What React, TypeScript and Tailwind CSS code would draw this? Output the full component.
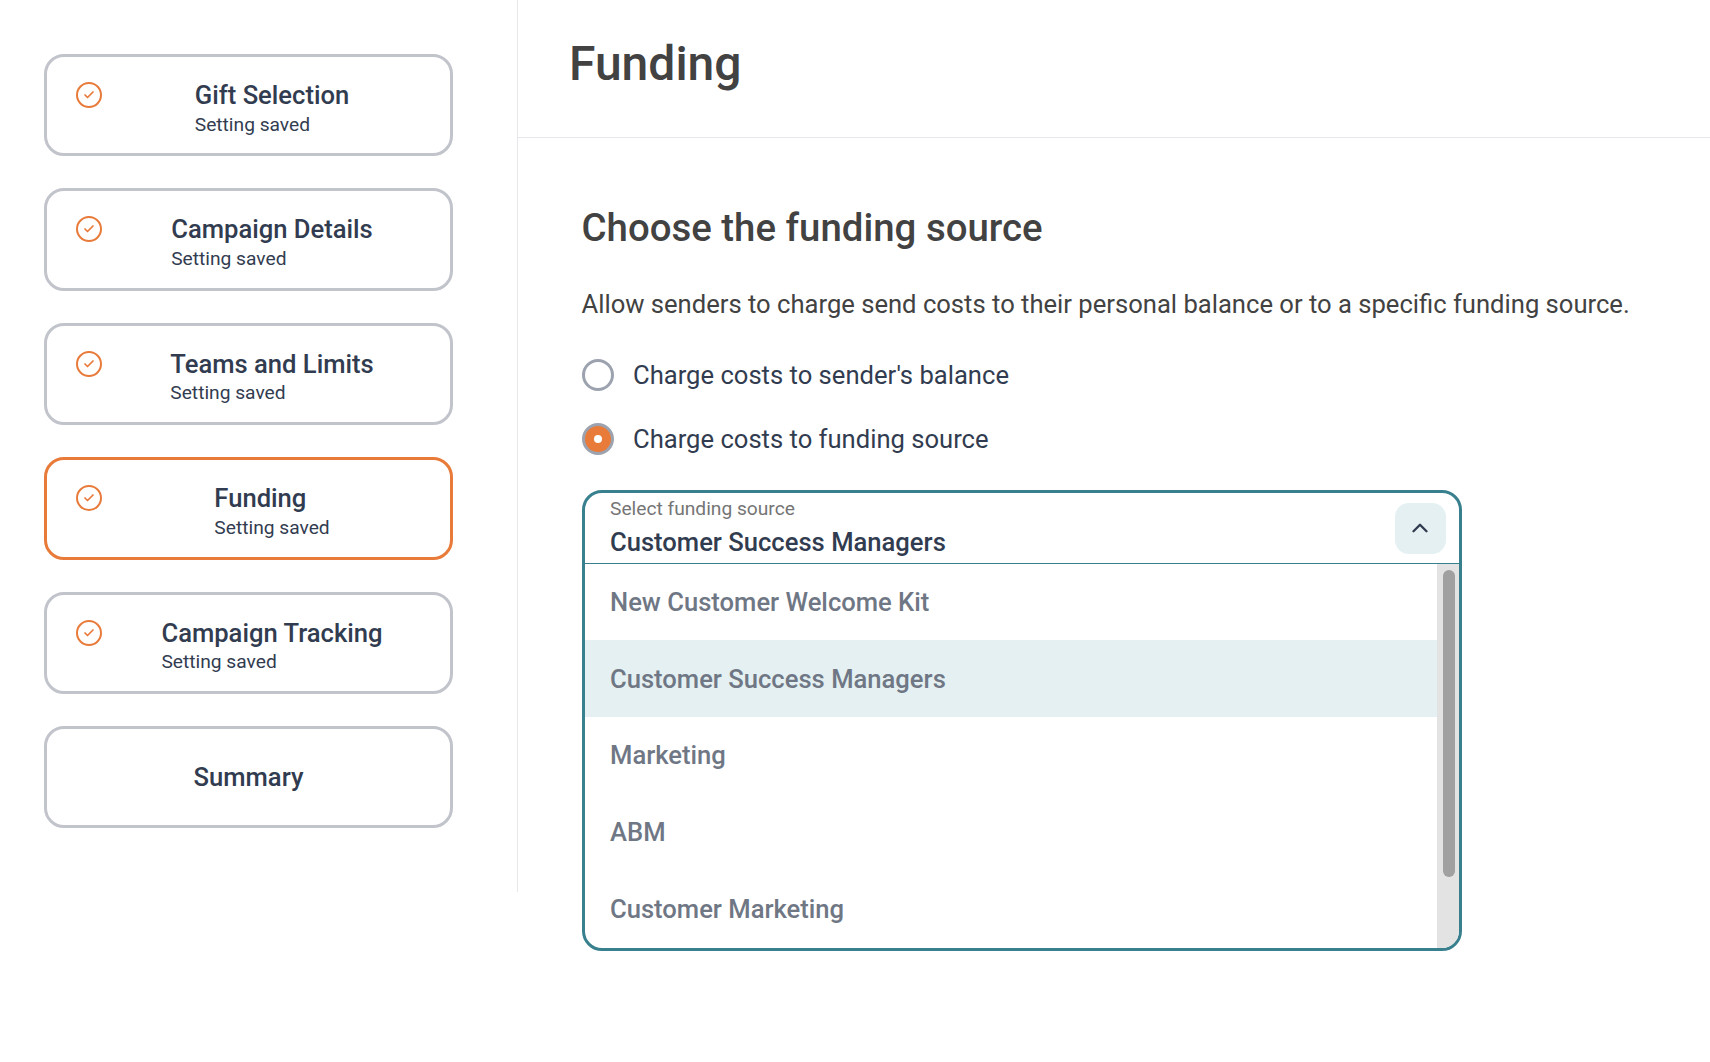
import { Check, ChevronUp } from "lucide-react";

const steps = [
  { title: "Gift Selection", saved: true },
  { title: "Campaign Details", saved: true },
  { title: "Teams and Limits", saved: true },
  { title: "Funding", saved: true, active: true },
  { title: "Campaign Tracking", saved: true },
  { title: "Summary", saved: false },
];

const sources = ["New Customer Welcome Kit", "Customer Success Managers", "Marketing", "ABM", "Customer Marketing"];

function StepCard({ title, saved, active }: { title: string; saved: boolean; active?: boolean }) {
  return (
    <div
      className={`flex h-[102.4px] w-[409px] rounded-[20px] border-[3px] bg-white ${
        active ? "border-[#e87a3a]" : "border-[#c2c4cc]"
      } ${saved ? "pl-[29px] pr-[8px]" : "items-center justify-center"}`}
    >
      {saved && (
        <div className="mt-[25px] flex h-[26px] w-[26px] shrink-0 items-center justify-center rounded-full border-2 border-[#e87a3a]">
          <Check size={12} strokeWidth={3.5} className="text-[#e87a3a]" />
        </div>
      )}
      <div className={saved ? "flex flex-1 justify-center pt-[21px]" : ""}>
        <div>
          <div className="text-[25.6px] leading-[34px] font-medium text-[#323c50]">{title}</div>
          {saved && <div className="-mt-[0.5px] text-[19.2px] leading-[26px] text-[#323c50]">Setting saved</div>}
        </div>
      </div>
    </div>
  );
}

export default function App() {
  return (
    <div className="flex h-[1062px] overflow-hidden bg-white font-['Roboto',sans-serif]">
      <aside className="h-[892px] w-[518px] shrink-0 border-r border-[#e5e7eb] pt-[54px] pl-[44px]">
        <div className="flex flex-col gap-[32px]">
          {steps.map((s) => (
            <StepCard key={s.title} {...s} />
          ))}
        </div>
      </aside>
      <main className="flex-1">
        <div className="flex h-[138px] items-start border-b border-[#e5e7eb] pt-[33px] pl-[51px]">
          <h1 className="text-[48px] leading-[62px] font-medium text-[#424242]">Funding</h1>
        </div>
        <div className="pt-[66px] pl-[64px]">
          <h2 className="-ml-[0.5px] text-[38.4px] leading-[48px] font-medium text-[#424242]">Choose the funding source</h2>
          <p className="mt-[35px] -ml-[0.5px] text-[25.6px] leading-[34px] text-[#424242]">
            Allow senders to charge send costs to their personal balance or to a specific funding source.
          </p>
          <div className="mt-[38px] flex items-center gap-[19px]">
            <span className="h-[32px] w-[32px] rounded-full border-[3px] border-[#9ca3af] bg-white" />
            <span className="text-[25.6px] leading-[32px] text-[#323c50]">Charge costs to sender's balance</span>
          </div>
          <div className="mt-[32px] flex items-center gap-[19px]">
            <span className="flex h-[32px] w-[32px] items-center justify-center rounded-full border-[3px] border-[#9ca3af] bg-[#e87a3a]">
              <span className="h-[8px] w-[8px] rounded-full bg-white" />
            </span>
            <span className="text-[25.6px] leading-[32px] text-[#323c50]">Charge costs to funding source</span>
          </div>
          <div className="mt-[35px] h-[461px] w-[880px] overflow-hidden rounded-[20px] border-[3px] border-[#38808e]">
            <div className="flex h-[71px] items-center justify-between border-b border-[#38808e] pr-[13px] pl-[25px]">
              <div className="pb-[1px]">
                <div className="text-[19.2px] leading-[24px] text-[#757575]">Select funding source</div>
                <div className="mt-[4px] text-[25.6px] leading-[34px] font-medium text-[#323c50]">Customer Success Managers</div>
              </div>
              <div className="flex h-[51px] w-[51px] items-center justify-center rounded-[14px] bg-[#e4f0f2]">
                <ChevronUp size={26} strokeWidth={2.2} className="-ml-px text-[#323c50]" />
              </div>
            </div>
            <div className="flex h-[386px]">
              <ul className="-mt-[0.5px] flex-1 overflow-hidden">
                {sources.map((s) => (
                  <li
                    key={s}
                    className={`flex h-[76.8px] shrink-0 items-center pl-[25px] text-[25.6px] font-medium text-[#6f7785] ${
                      s === "Customer Success Managers" ? "bg-[#e4f0f2]" : ""
                    }`}
                  >
                    {s}
                  </li>
                ))}
              </ul>
              <div className="w-[22px] bg-[#e3e3e3] px-[6px] pt-[6px]">
                <div className="h-[307px] w-[12px] rounded-full bg-[#a0a0a0]" />
              </div>
            </div>
          </div>
        </div>
      </main>
    </div>
  );
}
